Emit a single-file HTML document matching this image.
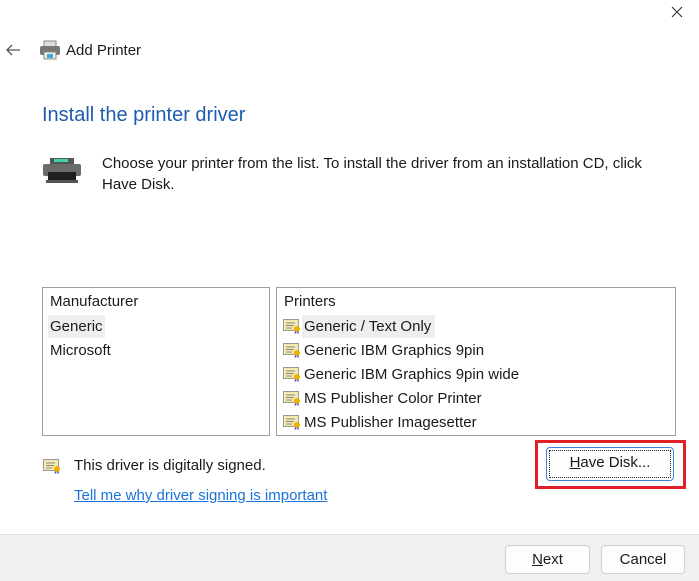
<!DOCTYPE html>
<html><head><meta charset="utf-8"><style>
*{margin:0;padding:0;box-sizing:border-box}
body{width:699px;height:581px;background:#fff;font-family:"Liberation Sans",sans-serif;font-size:15px;color:#1a1a1a;position:relative;overflow:hidden}
.a{position:absolute;white-space:nowrap}
.box{position:absolute;border:1px solid #a0a0a0;background:#fff}
.btn{position:absolute;border:1px solid #d0d0d0;border-radius:4px;background:#fdfdfd;text-align:center;line-height:27px}
</style></head><body>
<svg class="a" style="left:671px;top:6px" width="12" height="12"><path d="M1 1L11 11M11 1L1 11" stroke="#333" stroke-width="1.1"/></svg>
<svg class="a" style="left:4px;top:42px" width="18" height="16"><path d="M16 8H3M8 3L3 8l5 5" stroke="#555" stroke-width="1.3" fill="none"/></svg>
<svg class="a" style="left:39px;top:40px" width="22" height="20"><rect x="5" y="1" width="12" height="6" fill="#ddd" stroke="#888"/><rect x="1" y="6" width="20" height="9" rx="2" fill="#777"/><rect x="5" y="12" width="12" height="7" fill="#eee" stroke="#888"/><rect x="8" y="14" width="6" height="4" fill="#3ab0d8"/></svg>
<div class="a" style="left:66px;top:42px;font-size:15px">Add Printer</div>
<div class="a" style="left:42px;top:104px;font-size:20px;color:#1d5cae">Install the printer driver</div>
<svg class="a" style="left:42px;top:156px" width="40" height="30"><rect x="8" y="2" width="24" height="6" fill="#555"/><rect x="12" y="3" width="14" height="3" fill="#3fd3b0"/><rect x="1" y="8" width="38" height="12" rx="2" fill="#6b6b6b"/><rect x="6" y="16" width="28" height="8" fill="#1e1e1e"/><rect x="4" y="24" width="32" height="3" fill="#555"/></svg>
<div class="a" style="left:102px;top:153px;line-height:21px">Choose your printer from the list. To install the driver from an installation CD, click<br>Have Disk.</div>
<div class="box" style="left:42px;top:287px;width:228px;height:149px"></div>
<div class="a" style="left:50px;top:293px">Manufacturer</div>
<div class="a" style="left:48px;top:315px;width:57px;height:23px;background:#eeeeee"></div>
<div class="a" style="left:50px;top:318px">Generic</div>
<div class="a" style="left:50px;top:342px">Microsoft</div>
<div class="box" style="left:276px;top:287px;width:400px;height:149px"></div>
<div class="a" style="left:284px;top:293px">Printers</div>
<div class="a" style="left:302px;top:315px;width:133px;height:23px;background:#eeeeee"></div>
<div class="a" style="left:304px;top:318px">Generic / Text Only</div>
<div class="a" style="left:304px;top:342px">Generic IBM Graphics 9pin</div>
<div class="a" style="left:304px;top:366px">Generic IBM Graphics 9pin wide</div>
<div class="a" style="left:304px;top:390px">MS Publisher Color Printer</div>
<div class="a" style="left:304px;top:414px">MS Publisher Imagesetter</div>
<svg width="0" height="0" style="position:absolute"><defs><g id="c"><rect x="0.5" y="0.5" width="15" height="11" fill="#f6e9b0" stroke="#999"/><path d="M3 4h9M3 6.5h8M3 9h6" stroke="#888"/><circle cx="14" cy="10" r="3" fill="#f0b000"/><path d="M12.5 12.5v2M15 12.5v2" stroke="#2a5ad0" stroke-width="1.5"/></g></defs></svg>
<svg class="a" style="left:283px;top:319px" width="18" height="16"><use href="#c"/></svg>
<svg class="a" style="left:283px;top:343px" width="18" height="16"><use href="#c"/></svg>
<svg class="a" style="left:283px;top:367px" width="18" height="16"><use href="#c"/></svg>
<svg class="a" style="left:283px;top:391px" width="18" height="16"><use href="#c"/></svg>
<svg class="a" style="left:283px;top:415px" width="18" height="16"><use href="#c"/></svg>
<svg class="a" style="left:43px;top:459px" width="18" height="16"><use href="#c"/></svg>
<div class="a" style="left:74px;top:457px">This driver is digitally signed.</div>
<div class="a" style="left:74px;top:487px;color:#1a73d9;text-decoration:underline">Tell me why driver signing is important</div>
<div class="a" style="left:535px;top:440px;width:151px;height:49px;border:3px solid #e01f26"></div>
<div class="btn" style="left:546px;top:447px;width:128px;height:34px;border:1px solid #3b82d6;line-height:30px"><div style="position:absolute;left:2px;top:2px;right:2px;bottom:2px;border:1px dotted #222"></div><u>H</u>ave Disk...</div>
<div class="a" style="left:0;top:534px;width:699px;height:47px;background:#f0f0f0;border-top:1px solid #e4e4e4"></div>
<div class="btn" style="left:505px;top:545px;width:85px;height:29px"><u>N</u>ext</div>
<div class="btn" style="left:601px;top:545px;width:84px;height:29px">Cancel</div>
</body></html>
